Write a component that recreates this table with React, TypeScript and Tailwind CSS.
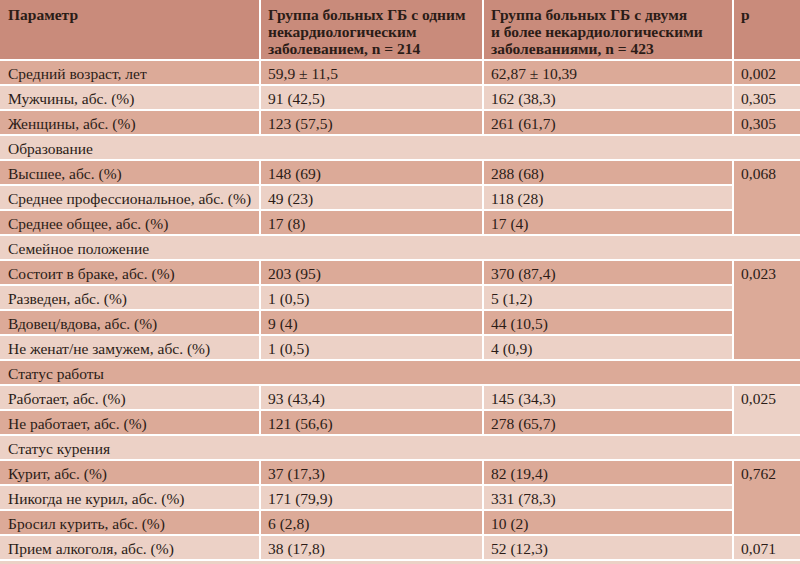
type Row =
  | { kind: "section"; label: string }
  | { kind: "data"; label: string; a: string; b: string; p?: string; span?: number; skipP?: boolean };

const rows: Row[] = [
  { kind: "data", label: "Средний возраст, лет", a: "59,9 ± 11,5", b: "62,87 ± 10,39", p: "0,002" },
  { kind: "data", label: "Мужчины, абс. (%)", a: "91 (42,5)", b: "162 (38,3)", p: "0,305" },
  { kind: "data", label: "Женщины, абс. (%)", a: "123 (57,5)", b: "261 (61,7)", p: "0,305" },
  { kind: "section", label: "Образование" },
  { kind: "data", label: "Высшее, абс. (%)", a: "148 (69)", b: "288 (68)", p: "0,068", span: 3 },
  { kind: "data", label: "Среднее профессиональное, абс. (%)", a: "49 (23)", b: "118 (28)", skipP: true },
  { kind: "data", label: "Среднее общее, абс. (%)", a: "17 (8)", b: "17 (4)", skipP: true },
  { kind: "section", label: "Семейное положение" },
  { kind: "data", label: "Состоит в браке, абс. (%)", a: "203 (95)", b: "370 (87,4)", p: "0,023", span: 4 },
  { kind: "data", label: "Разведен, абс. (%)", a: "1 (0,5)", b: "5 (1,2)", skipP: true },
  { kind: "data", label: "Вдовец/вдова, абс. (%)", a: "9 (4)", b: "44 (10,5)", skipP: true },
  { kind: "data", label: "Не женат/не замужем, абс. (%)", a: "1 (0,5)", b: "4 (0,9)", skipP: true },
  { kind: "section", label: "Статус работы" },
  { kind: "data", label: "Работает, абс. (%)", a: "93 (43,4)", b: "145 (34,3)", p: "0,025", span: 2 },
  { kind: "data", label: "Не работает, абс. (%)", a: "121 (56,6)", b: "278 (65,7)", skipP: true },
  { kind: "section", label: "Статус курения" },
  { kind: "data", label: "Курит, абс. (%)", a: "37 (17,3)", b: "82 (19,4)", p: "0,762", span: 3 },
  { kind: "data", label: "Никогда не курил, абс. (%)", a: "171 (79,9)", b: "331 (78,3)", skipP: true },
  { kind: "data", label: "Бросил курить, абс. (%)", a: "6 (2,8)", b: "10 (2)", skipP: true },
  { kind: "data", label: "Прием алкоголя, абс. (%)", a: "38 (17,8)", b: "52 (12,3)", p: "0,071" },
];

const cell = "border-b-2 border-white align-top pt-[3px] leading-[19px]";

export default function App() {
  return (
    <div className="w-[800px] h-[564px] overflow-hidden bg-[#ecd1c6] font-['Liberation_Serif',serif] text-[15.5px] text-[#2b1c17]">
      <table className="w-[800px] table-fixed border-collapse">
        <colgroup>
          <col className="w-[260px]" />
          <col className="w-[223px]" />
          <col className="w-[250px]" />
          <col className="w-[67px]" />
        </colgroup>
        <thead>
          <tr className="h-[60px] bg-[#c98b7b] text-[15.5px] leading-[17px]">
            <th className="border-b-2 border-r-2 border-white px-2 pt-[6px] text-left align-top font-bold">Параметр</th>
            <th className="border-b-2 border-r-2 border-white px-[7px] pt-[6px] text-left align-top font-bold">
              Группа больных ГБ с одним некардиологическим заболеванием, n = 214
            </th>
            <th className="border-b-2 border-r-2 border-white px-[7px] pt-[6px] text-left align-top font-bold">
              Группа больных ГБ с двумя
              <br />и более некардиологическими заболеваниями, n = 423
            </th>
            <th className="border-b-2 border-white px-[7px] pt-[6px] text-left align-top font-bold">p</th>
          </tr>
        </thead>
        <tbody>
          {rows.map((r, i) => {
            const bg = i % 2 === 0 ? "bg-[#dcaa98]" : "bg-[#ecd1c6]";
            if (r.kind === "section") {
              return (
                <tr key={r.label} className={`h-[25px] ${bg}`}>
                  <td colSpan={4} className={`${cell} px-2`}>
                    {r.label}
                  </td>
                </tr>
              );
            }
            return (
              <tr key={r.label} className={`h-[25px] ${bg}`}>
                <td className={`${cell} border-r-2 px-2 whitespace-nowrap`}>{r.label}</td>
                <td className={`${cell} border-r-2 px-[7px]`}>{r.a}</td>
                <td className={`${cell} border-r-2 px-[7px]`}>{r.b}</td>
                {!r.skipP && (
                  <td rowSpan={r.span ?? 1} className={`${cell} px-[7px] ${bg}`}>
                    {r.p}
                  </td>
                )}
              </tr>
            );
          })}
        </tbody>
      </table>
    </div>
  );
}
